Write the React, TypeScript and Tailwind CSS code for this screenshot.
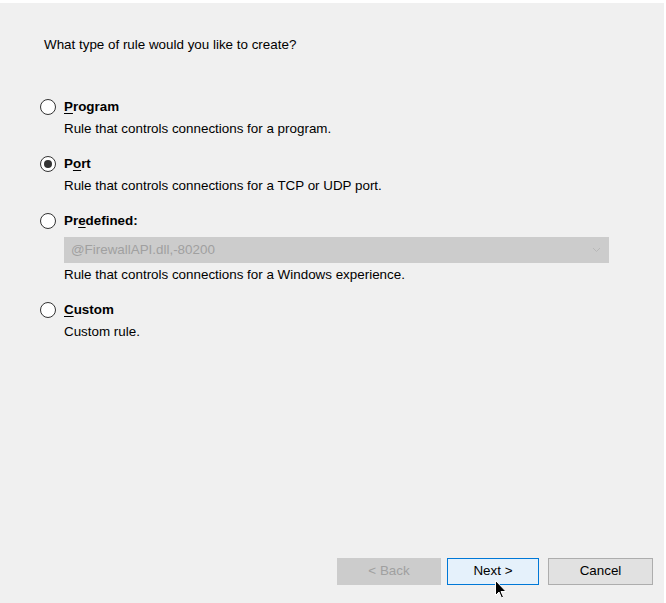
import React from "react";

type Option = {
  id: string;
  before: string;
  key: string;
  after: string;
  desc: string;
  checked?: boolean;
  select?: boolean;
};

const options: Option[] = [
  { id: "program", before: "", key: "P", after: "rogram", desc: "Rule that controls connections for a program." },
  { id: "port", before: "P", key: "o", after: "rt", desc: "Rule that controls connections for a TCP or UDP port.", checked: true },
  { id: "predefined", before: "Pr", key: "e", after: "defined:", desc: "Rule that controls connections for a Windows experience.", select: true },
  { id: "custom", before: "", key: "C", after: "ustom", desc: "Custom rule." },
];

function Radio({ checked }: { checked?: boolean }) {
  return (
    <span className="w-[16px] h-[16px] rounded-full border border-[#333333] bg-white flex items-center justify-center shrink-0">
      {checked && <span className="w-[8px] h-[8px] rounded-full bg-[#333333]" />}
    </span>
  );
}

export default function App() {
  return (
    <div
      className="w-[666px] h-[603px] bg-white relative overflow-hidden text-[13.4px] text-black"
      style={{ fontFamily: '"Liberation Sans", Arial, sans-serif' }}
    >
      <div className="mt-[3px] mr-[2px] h-[600px] bg-[#f0f0f0] flex flex-col">
        <p className="pl-[44px] pt-[34px] leading-[16px]">What type of rule would you like to create?</p>

        <div className="pl-[40px] pt-[45px] flex flex-col gap-[18px]">
          {options.map((o) => (
            <div key={o.id} className="flex flex-col">
              <label className="flex items-center gap-[8px] h-[18px]">
                <Radio checked={o.checked} />
                <span className="font-bold">
                  {o.before}
                  <span className="underline underline-offset-2">{o.key}</span>
                  {o.after}
                </span>
              </label>
              {o.select && (
                <div className="ml-[24px] mt-[7px] w-[545px] h-[26px] bg-[#cccccc] flex items-center justify-between pl-[7px] pr-[8px] text-[#a0a0a0]">
                  <span>@FirewallAPI.dll,-80200</span>
                  <svg width="9" height="6" viewBox="0 0 9 6" fill="none">
                    <path d="M1 1l3.5 3.5L8 1" stroke="#b8b8b8" strokeWidth="1" />
                  </svg>
                </div>
              )}
              <p className={`ml-[24px] leading-[16px] ${o.select ? "mt-[4px]" : "mt-[5px]"}`}>{o.desc}</p>
            </div>
          ))}
        </div>

        <div className="mt-auto mb-[18px] flex justify-end pr-[11px] gap-[6px]">
          <button className="w-[104px] h-[27px] bg-[#cccccc] border border-[#cccccc] text-[#a0a0a0]">&lt; Back</button>
          <button className="w-[92px] h-[27px] bg-[#e5f1fb] border border-[#0078d7] mr-[3px]">Next &gt;</button>
          <button className="w-[105px] h-[27px] bg-[#e1e1e1] border border-[#adadad]">Cancel</button>
        </div>
      </div>

      <svg className="absolute left-[495px] top-[580px]" width="12" height="19" viewBox="0 0 12 19">
        <path d="M0.5 0.5v15l3.5-3.5 2.5 6 2-1-2.5-5.5h5z" fill="black" stroke="white" strokeWidth="1" />
      </svg>
    </div>
  );
}
